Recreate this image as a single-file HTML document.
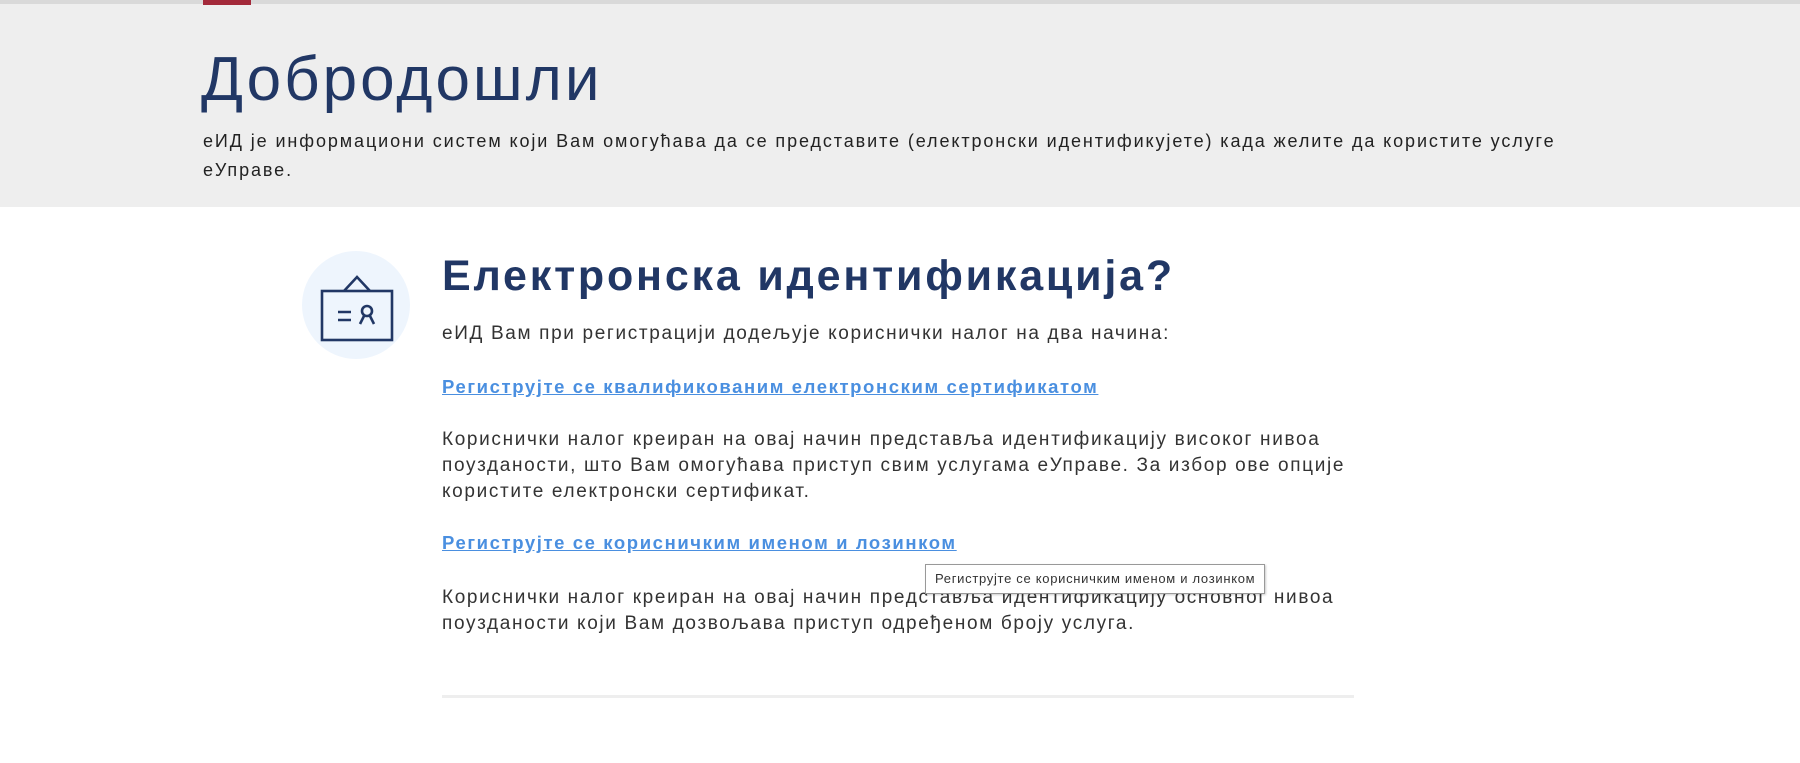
<!DOCTYPE html>
<html><head><meta charset="utf-8"><style>
body{margin:0;width:1800px;height:763px;overflow:hidden;background:#fff;font-family:"Liberation Sans",sans-serif;position:relative;color:#333}
.top{position:absolute;left:0;top:0;width:1800px;height:207px;background:#eeeeee;border-top:4px solid #d9d9d9;box-sizing:border-box}
.red{position:absolute;left:203px;top:0;width:48px;height:5px;background:#a3293a}
h1{position:absolute;left:201px;top:44px;margin:0;font-weight:normal;font-size:62px;color:#213765;letter-spacing:3px}
.intro{position:absolute;left:203px;top:127px;width:1420px;font-size:18px;line-height:29px;color:#222;letter-spacing:1.9px}
.circle{position:absolute;left:302px;top:251px;width:108px;height:108px;border-radius:50%;background:#eef5fd}
h2{position:absolute;left:442px;top:252px;margin:0;font-size:43px;font-weight:bold;color:#213765;letter-spacing:2.8px}
.t{position:absolute;left:442px;font-size:19px;line-height:26px;color:#333;width:920px;letter-spacing:1.65px}
a{color:#4a8fe0;font-weight:bold;text-decoration:underline;letter-spacing:1.6px;font-size:18.5px}
.hr{position:absolute;left:442px;top:695px;width:912px;height:3px;background:#eeeeee}
.tip{position:absolute;left:925px;top:564px;height:28px;padding:0 9px;border:1px solid #999;background:#fff;font-size:13px;line-height:28px;color:#333;box-shadow:1px 1px 2px rgba(0,0,0,.2);letter-spacing:0.7px}
</style></head><body>
<div class="top"></div><div class="red"></div>
<h1>Добродошли</h1>
<div class="intro">еИД је информациони систем који Вам омогућава да се представите (електронски идентификујете) када желите да користите услуге<br>еУправе.</div>
<div class="circle"></div>
<svg style="position:absolute;left:302px;top:251px" width="108" height="108" viewBox="0 0 108 108">
<g fill="none" stroke="#213765" stroke-width="2.6">
<rect x="20" y="40" width="70" height="49"/>
<path d="M42 40 L55 26 L68 40"/>
<path d="M36 61 H49 M36 69 H49"/>
<circle cx="65" cy="60" r="5"/>
<path d="M62 65 L58 73 M68 65 L72 73"/>
</g></svg>
<h2>Електронска идентификација?</h2>
<div class="t" style="top:321px">еИД Вам при регистрацији додељује кориснички налог на два начина:</div>
<div class="t" style="top:374px"><a>Региструјте се квалификованим електронским сертификатом</a></div>
<div class="t" style="top:427px">Кориснички налог креиран на овај начин представља идентификацију високог нивоа поузданости, што Вам омогућава приступ свим услугама еУправе. За избор ове опције користите електронски сертификат.</div>
<div class="t" style="top:530px"><a>Региструјте се корисничким именом и лозинком</a></div>
<div class="t" style="top:585px">Кориснички налог креиран на овај начин представља идентификацију основног нивоа поузданости који Вам дозвољава приступ одређеном броју услуга.</div>
<div class="hr"></div>
<div class="tip">Региструјте се корисничким именом и лозинком</div>
</body></html>
